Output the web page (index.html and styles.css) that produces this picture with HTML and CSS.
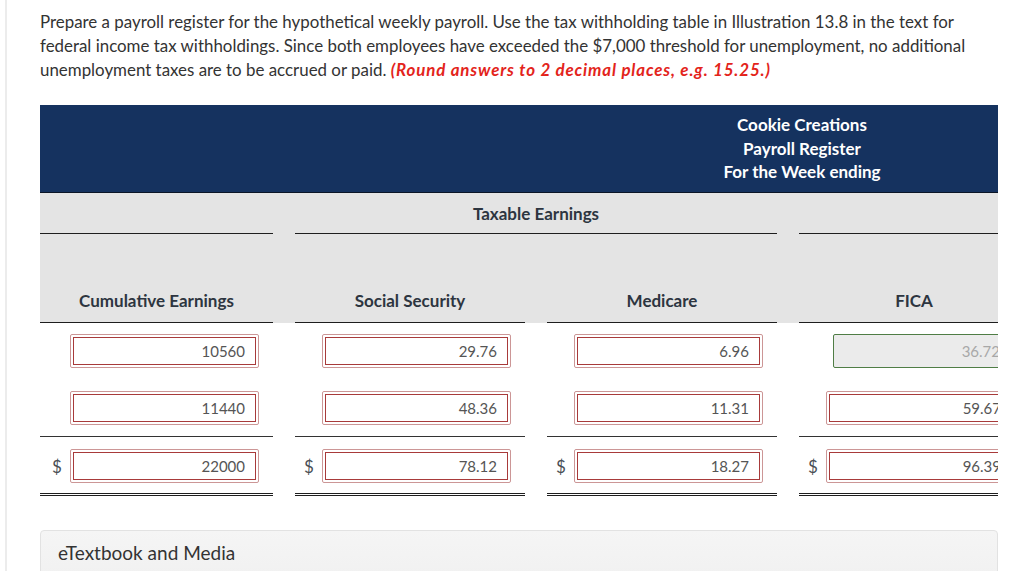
FILE: index.html
```html
<!DOCTYPE html>
<html lang="en">
<head>
<meta charset="utf-8">
<title>Payroll Register</title>
<link rel="stylesheet" href="styles.css">
</head>
<body>
<div class="page">
  <p class="question">Prepare a payroll register for the hypothetical weekly payroll. Use the tax withholding table in Illustration 13.8 in the text for federal income tax withholdings. Since both employees have exceeded the $7,000 threshold for unemployment, no additional unemployment taxes are to be accrued or paid. <span class="hint">(Round answers to 2 decimal places, e.g. 15.25.)</span></p>

  <div class="table">
    <div class="grid title-bar">
      <div class="title">
        <div>Cookie Creations</div>
        <div>Payroll Register</div>
        <div>For the Week ending</div>
      </div>
    </div>

    <div class="grey">
      <div class="grid group-row">
        <div class="cell ruled"></div>
        <div class="cell ruled span2">Taxable Earnings</div>
        <div class="cell ruled"></div>
      </div>
      <div class="grid head-row">
        <div class="cell ruled">Cumulative Earnings</div>
        <div class="cell ruled">Social Security</div>
        <div class="cell ruled">Medicare</div>
        <div class="cell ruled">FICA</div>
      </div>
    </div>

    <div class="grid data-row">
      <div class="dcell"><span class="field"><span class="input">10560</span></span></div>
      <div class="dcell"><span class="field"><span class="input">29.76</span></span></div>
      <div class="dcell"><span class="field"><span class="input">6.96</span></span></div>
      <div class="dcell"><span class="input ok">36.72</span></div>
    </div>
    <div class="grid data-row">
      <div class="dcell rule"><span class="field"><span class="input">11440</span></span></div>
      <div class="dcell rule"><span class="field"><span class="input">48.36</span></span></div>
      <div class="dcell rule"><span class="field"><span class="input">11.31</span></span></div>
      <div class="dcell rule"><span class="field"><span class="input">59.67</span></span></div>
    </div>
    <div class="grid data-row total">
      <div class="dcell double"><span class="dollar first">$</span><span class="field"><span class="input">22000</span></span></div>
      <div class="dcell double"><span class="dollar">$</span><span class="field"><span class="input">78.12</span></span></div>
      <div class="dcell double"><span class="dollar">$</span><span class="field"><span class="input">18.27</span></span></div>
      <div class="dcell double"><span class="dollar">$</span><span class="field"><span class="input">96.39</span></span></div>
    </div>
  </div>

  <div class="media">eTextbook and Media</div>
</div>
</body>
</html>
```

FILE: styles.css
```css
html, body {
  margin: 0;
  padding: 0;
  background: #ffffff;
}

body {
  font-family: Lato, "Open Sans", "Liberation Sans", sans-serif;
  color: #333333;
  overflow: hidden;
  height: 571px;
}

.page {
  margin-left: 5px;
  border-left: 2px solid #ececec;
  padding-left: 33px;
  width: 958px;
  min-height: 571px;
}

.question {
  margin: 0;
  padding-top: 10px;
  font-size: 16.9px;
  line-height: 24px;
  color: #333333;
}

.hint {
  color: #e3241b;
  font-weight: bold;
  font-style: italic;
  letter-spacing: 0.85px;
}

.table {
  margin-top: 23px;
  width: 958px;
  overflow: hidden;
}

.grid {
  display: grid;
  grid-template-columns: 233px 230px 230px 230px;
  column-gap: 22px;
  width: 989px;
}

.title-bar {
  background: #15325f;
  height: 87px;
  border-bottom: 1px solid #0b1526;
  width: 958px;
}

.title {
  grid-column: 3 / 5;
  padding: 8px 0 0 28px;
  text-align: center;
  color: #ffffff;
  font-weight: bold;
  font-size: 17px;
  line-height: 23.5px;
}

.grey {
  background: #e4e4e4;
  width: 958px;
}

.cell {
  font-weight: bold;
  font-size: 17px;
  line-height: 24px;
  color: #2d3540;
  text-align: center;
}

.ruled {
  border-bottom: 1px solid #1e1e1e;
}

.span2 {
  grid-column: 2 / 4;
}

.group-row .cell {
  height: 41px;
  display: flex;
  align-items: center;
  justify-content: center;
  padding-top: 1px;
  box-sizing: border-box;
}

.head-row .cell {
  height: 89px;
  display: flex;
  align-items: flex-end;
  justify-content: center;
  padding-bottom: 9px;
  box-sizing: border-box;
}

.dcell {
  display: flex;
  align-items: center;
  justify-content: flex-end;
  padding: 11px 14px 11px 0;
}

.dcell.rule {
  padding-top: 12px;
  padding-bottom: 11px;
  border-bottom: 1px solid #333333;
}

.dcell.double {
  padding-top: 12px;
  padding-bottom: 10px;
  border-bottom: 3px double #1e1e1e;
}

.dollar {
  margin-right: auto;
  margin-left: 9px;
  font-size: 17px;
  color: #4a4f55;
}

.dollar.first {
  margin-left: 12px;
}

.field {
  display: block;
  width: 189px;
  height: 34px;
  box-sizing: border-box;
  border: 1px solid #cc9696;
  border-radius: 2px;
  padding: 2px;
  background: #ffffff;
}

.input {
  display: block;
  height: 28px;
  box-sizing: border-box;
  border: 1px solid #a83a3a;
  background: #ffffff;
  text-align: right;
  padding-right: 10px;
  font-size: 15px;
  line-height: 26px;
  color: #555555;
}

.input.ok {
  width: 182px;
  height: 34px;
  border: 1px solid #4f7d45;
  border-radius: 2px;
  background: #ebebeb;
  color: #a8a8a8;
  padding-right: 14px;
  line-height: 32px;
}

.media {
  margin-top: 34px;
  height: 60px;
  box-sizing: border-box;
  border: 1px solid #e2e2e2;
  border-radius: 4px;
  background: linear-gradient(#f5f5f5, #f0f0f0);
  padding: 10px 17px;
  font-size: 19px;
  line-height: 24px;
  color: #333333;
}
```
